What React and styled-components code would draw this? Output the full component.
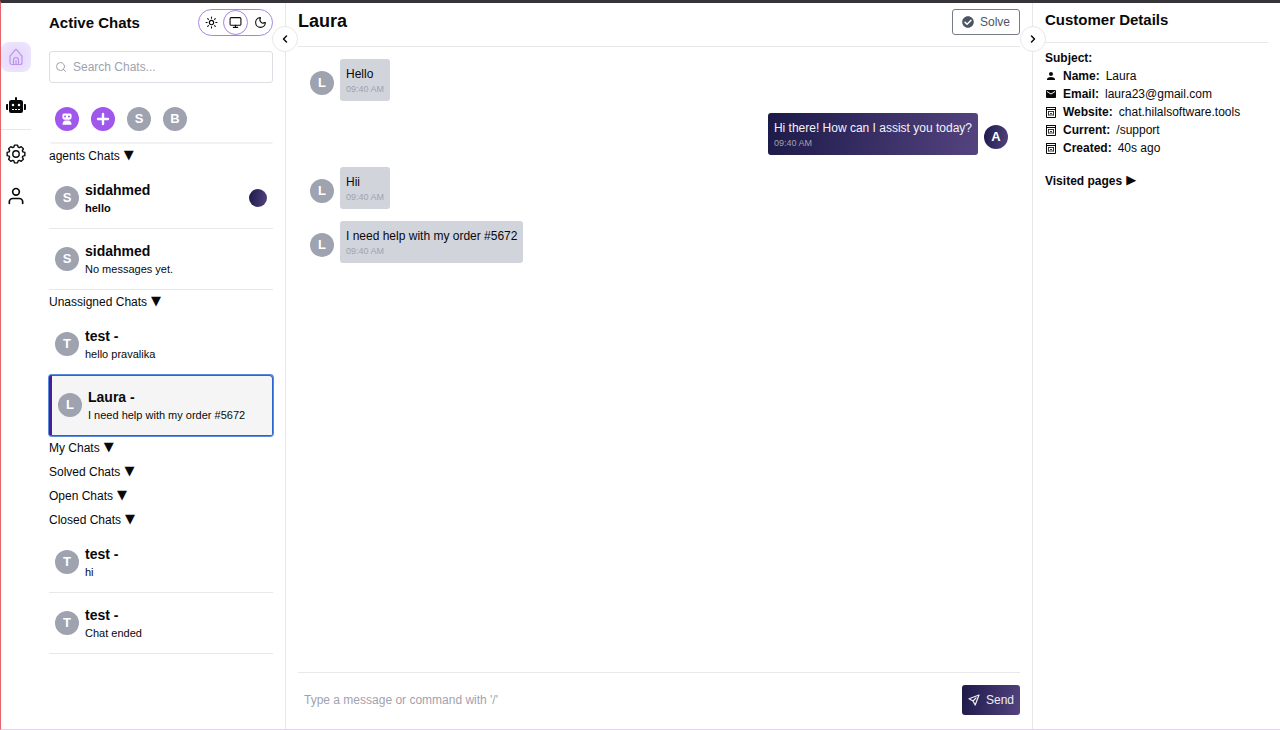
import React, { useState } from 'react';
import styled, { createGlobalStyle } from 'styled-components';
import { FaRobot, FaCheckCircle } from 'react-icons/fa';
import { FiSearch, FiUser, FiChevronLeft, FiChevronRight } from 'react-icons/fi';
import { MdEmail, MdPerson } from 'react-icons/md';
import { Sun, Monitor, Moon } from 'lucide-react';

const GRADIENT = 'linear-gradient(100deg, #1c1a49 0%, #54437f 100%)';
const LINE = '#e8e8eb';
const GREY = '#9fa2af';
const PURPLE = '#9f57ec';

const SECTIONS = [
  {
    title: 'agents Chats',
    chats: [
      { id: 1, initial: 'S', name: 'sidahmed', last: 'hello', unread: true },
      { id: 2, initial: 'S', name: 'sidahmed', last: 'No messages yet.' },
    ],
  },
  {
    title: 'Unassigned Chats',
    chats: [
      { id: 3, initial: 'T', name: 'test -', last: 'hello pravalika' },
      { id: 4, initial: 'L', name: 'Laura -', last: 'I need help with my order #5672' },
    ],
  },
  { title: 'My Chats', chats: [] },
  { title: 'Solved Chats', chats: [] },
  { title: 'Open Chats', chats: [] },
  {
    title: 'Closed Chats',
    chats: [
      { id: 5, initial: 'T', name: 'test -', last: 'hi' },
      { id: 6, initial: 'T', name: 'test -', last: 'Chat ended' },
    ],
  },
];

const MESSAGES = [
  { text: 'Hello', time: '09:40 AM' },
  { text: 'Hi there! How can I assist you today?', time: '09:40 AM', mine: true },
  { text: 'Hii', time: '09:40 AM' },
  { text: 'I need help with my order #5672', time: '09:40 AM' },
];

const DETAILS = [
  { icon: <MdPerson />, label: 'Name:', value: 'Laura' },
  { icon: <MdEmail />, label: 'Email:', value: 'laura23@gmail.com' },
  { icon: <PageIcon />, label: 'Website:', value: 'chat.hilalsoftware.tools' },
  { icon: <PageIcon />, label: 'Current:', value: '/support' },
  { icon: <PageIcon />, label: 'Created:', value: '40s ago' },
];

function PageIcon() {
  return (
    <svg viewBox="0 0 12 12" fill="none" stroke="currentColor">
      <path d="M1.5 1v10.500h9V1M1 1.500h10M1 3.500h10" />
      <path d="M3.500 5v4.500M8.500 5v4.500M3.500 9h5M3.500 5.500h5M5 7.500h2" strokeWidth="0.8" />
    </svg>
  );
}

function HomeIcon() {
  return (
    <svg viewBox="0 0 18 18" width="18" height="18" fill="none" stroke="currentColor" strokeWidth="1.2" strokeLinejoin="round" strokeLinecap="round">
      <path d="M3 8.2 8.300 1.800a1 1 0 0 1 1.400 0L15 8.200v6.300a2 2 0 0 1-2 2H5a2 2 0 0 1-2-2z" />
      <path d="M6.500 16.300v-4.300a2.500 2.500 0 0 1 5 0v4.300M9 12.600v3.600" />
    </svg>
  );
}

// outline of a gear with eight rounded teeth
const GEAR_POINTS = Array.from({ length: 8 }, (_, i) => (
  [[-10, 9], [10, 9], [17, 7.2], [28, 7.2]].map(([offset, radius]) => {
    const angle = ((i * 45 + offset) * Math.PI) / 180;
    return `${(10 + radius * Math.sin(angle)).toFixed(2)},${(10 - radius * Math.cos(angle)).toFixed(2)}`;
  }).join(' ')
)).join(' ');

function GearIcon() {
  return (
    <svg viewBox="0 0 20 20" width="20" height="20" fill="none" stroke="currentColor" strokeWidth="1.4" strokeLinejoin="round">
      <polygon points={GEAR_POINTS} />
      <circle cx="10" cy="10" r="3.2" />
    </svg>
  );
}

function AgentIcon() {
  return (
    <svg viewBox="0 0 12 14" width="12" height="14">
      <path
        fill="#fff"
        fillRule="evenodd"
        d="M3 1.5h6a1.6 1.6 0 0 1 1.6 1.6v2A2.6 2.6 0 0 1 8 7.700H4a2.600 2.600 0 0 1-2.600-2.600v-2A1.600 1.600 0 0 1 3 1.500zM4.100 3.400a1 1 0 1 0 0 2 1 1 0 0 0 0-2zm3.800 0a1 1 0 1 0 0 2 1 1 0 0 0 0-2z"
      />
      <path fill="#fff" d="M3.800 8.600h4.400c1.500.7 2.300 2 2.300 4.200h-9c0-2.200.8-3.500 2.300-4.200z" />
    </svg>
  );
}

export default function App() {
  const [selected, setSelected] = useState(4);

  return (
    <Page>
      <GlobalStyle />
      <Nav>
        <NavLink href="#home" aria-label="Home" $active><HomeIcon /></NavLink>
        <NavLink href="#bots" aria-label="Bots"><FaRobot size={20} /></NavLink>
        <NavLine />
        <NavLink href="#settings" aria-label="Settings"><GearIcon /></NavLink>
        <NavLink href="#profile" aria-label="Profile"><FiUser size={20} /></NavLink>
      </Nav>

      <ChatPanel>
        <Collapse aria-label="Collapse chats"><FiChevronLeft size={12} strokeWidth={3} /></Collapse>
        <PanelHead>
          <Heading>Active Chats</Heading>
          <ThemeSwitch>
            <ThemeButton aria-label="Light"><Sun size={13} /></ThemeButton>
            <ThemeButton aria-label="System" $active><Monitor size={13} /></ThemeButton>
            <ThemeButton aria-label="Dark"><Moon size={13} /></ThemeButton>
          </ThemeSwitch>
        </PanelHead>
        <SearchBox>
          <FiSearch size={12} />
          <SearchInput type="text" placeholder="Search Chats..." />
        </SearchBox>
        <Agents>
          <Bubble as="button" $color={PURPLE} aria-label="Bot"><AgentIcon /></Bubble>
          <Bubble as="button" $color={PURPLE} aria-label="Add agent">
            <svg width="14" height="14" viewBox="0 0 14 14" stroke="#fff" strokeWidth="2.4" strokeLinecap="round">
              <path d="M7 2v10M2 7h10" />
            </svg>
          </Bubble>
          <Bubble as="button">S</Bubble>
          <Bubble as="button">B</Bubble>
        </Agents>
        {SECTIONS.map(section => (
          <section key={section.title}>
            <SectionToggle>{section.title} <Arrow>▼</Arrow></SectionToggle>
            {section.chats.map(chat => (
              <ChatRow key={chat.id} $active={chat.id === selected} onClick={() => setSelected(chat.id)}>
                <Bubble>{chat.initial}</Bubble>
                <ChatText>
                  <ChatName>{chat.name}</ChatName>
                  <LastMessage $unread={chat.unread}>{chat.last}</LastMessage>
                </ChatText>
                {chat.unread && <UnreadDot />}
              </ChatRow>
            ))}
          </section>
        ))}
      </ChatPanel>

      <Conversation>
        <ConversationHead>
          <CustomerName>Laura</CustomerName>
          <SolveButton><FaCheckCircle size={12} /> Solve</SolveButton>
        </ConversationHead>
        <Messages>
          {MESSAGES.map((message, i) => (
            <MessageRow key={i} $mine={message.mine}>
              <Bubble $color={message.mine && GRADIENT}>{message.mine ? 'A' : 'L'}</Bubble>
              <MessageBox $mine={message.mine}>
                <div>{message.text}</div>
                <Time>{message.time}</Time>
              </MessageBox>
            </MessageRow>
          ))}
        </Messages>
        <Composer>
          <MessageInput type="text" aria-label="Message" placeholder="Type a message or command with '/'" />
          <SendButton>
            <svg width="12" height="12" viewBox="0 0 12 12" fill="none" stroke="currentColor" strokeWidth="1.2" strokeLinejoin="round" strokeLinecap="round">
              <path d="M11 1 1 4.800l4 2.200 2.200 4zM5 7l3-3" />
            </svg>
            Send
          </SendButton>
        </Composer>
      </Conversation>

      <Details>
        <Collapse aria-label="Collapse details" $left><FiChevronRight size={12} strokeWidth={3} /></Collapse>
        <DetailsHead><Heading>Customer Details</Heading></DetailsHead>
        <DetailRow><b>Subject:</b></DetailRow>
        {DETAILS.map(row => (
          <DetailRow key={row.label}>
            {row.icon}
            <b>{row.label}</b>
            <span>{row.value}</span>
          </DetailRow>
        ))}
        <VisitedToggle>Visited pages <Arrow>▶</Arrow></VisitedToggle>
      </Details>
    </Page>
  );
}

const GlobalStyle = createGlobalStyle`
  * {
    box-sizing: border-box;
  }
  body {
    margin: 0;
    color: #09090b;
    background: #fff;
    font: 12px/18px "Liberation Sans", Arial, sans-serif;
  }
  button, input {
    font: inherit;
    color: inherit;
    margin: 0;
    padding: 0;
    border: none;
    background: none;
  }
  button {
    cursor: pointer;
  }
`

const Page = styled.div`
  display: flex;
  min-height: 100vh;
  border-top: 3px solid #37353a;
  border-left: 1px solid #e5646a;
  border-bottom: 1px solid #e3d0ea;
`

const Nav = styled.nav`
  flex: none;
  width: 36px;
  padding-top: 39px;
  display: flex;
  flex-direction: column;
`

const NavLink = styled.a`
  width: 30px;
  height: 30px;
  margin-bottom: ${props => props.$active ? 18 : 12}px;
  display: flex;
  align-items: center;
  justify-content: center;
  border-radius: 8px;
  color: ${props => props.$active ? '#bd93ee' : '#09090b'};
  background: ${props => props.$active ? 'radial-gradient(#e3d5f9, #f0e8fe)' : 'none'};
`

const NavLine = styled.div`
  width: 30px;
  height: 1px;
  margin: -3px 0 9px;
  background: ${LINE};
`

const ChatPanel = styled.aside`
  position: relative;
  flex: none;
  width: 249px;
  padding: 6px 12px;
  border-right: 1px solid ${LINE};
`

const Collapse = styled.button`
  position: absolute;
  z-index: 1;
  top: 23px;
  ${props => props.$left ? 'left: -13px;' : 'right: -13px;'}
  width: 26px;
  height: 26px;
  display: flex;
  align-items: center;
  justify-content: center;
  border: 1px solid ${LINE};
  border-radius: 50%;
  background: #fff;
`

const PanelHead = styled.header`
  display: flex;
  align-items: center;
  justify-content: space-between;
`

const Heading = styled.h2`
  margin: 0;
  font-size: 15px;
  line-height: 21px;
`

const ThemeSwitch = styled.div`
  display: flex;
  border: 1px solid #a583ec;
  border-radius: 14px;
`

const ThemeButton = styled.button`
  width: ${props => props.$active ? 25 : 24}px;
  height: 25px;
  display: flex;
  align-items: center;
  justify-content: center;
  border-radius: 50%;
  border: 1px solid ${props => props.$active ? '#a583ec' : 'transparent'};
`

const SearchBox = styled.label`
  display: flex;
  align-items: center;
  gap: 6px;
  height: 32px;
  margin-top: 15px;
  padding: 0 5px;
  border: 1px solid #dddee3;
  border-radius: 3px;
  color: ${GREY};
`

const SearchInput = styled.input`
  flex: 1;
  min-width: 0;
  outline: none;
  &::placeholder {
    color: ${GREY};
  }
`

const Agents = styled.div`
  display: flex;
  gap: 12px;
  margin-top: 18px;
  padding: 6px 6px 11px;
  border-bottom: 2px solid #f2f2f4;
  border-radius: 3px;
`

const Bubble = styled.span`
  flex: none;
  width: 24px;
  height: 24px;
  display: flex;
  align-items: center;
  justify-content: center;
  border-radius: 50%;
  color: #fff;
  font-size: 13px;
  font-weight: bold;
  background: ${props => props.$color || GREY};
`

const SectionToggle = styled.button`
  display: flex;
  align-items: center;
  gap: 4px;
  height: 24px;
`

const Arrow = styled.span`
  padding-bottom: 2px;
  font-family: "DejaVu Sans", sans-serif;
  font-size: 13px;
  line-height: 16px;
  font-weight: normal;
`

const ChatRow = styled.button`
  width: 100%;
  height: 61px;
  padding: 0 6px;
  display: flex;
  align-items: center;
  gap: 6px;
  text-align: left;
  border-bottom: 1px solid ${LINE};
  ${props => props.$active && `
    border-left: 3px solid #4c1d95;
    border-bottom-color: #2b66cf;
    border-radius: 3px;
    background: #f5f5f6;
    box-shadow: inset -1px 1px #2b66cf, 0 0 0 1px #5b8bdc;
  `}
`

const ChatText = styled.div`
  flex: 1;
  min-width: 0;
`

const ChatName = styled.div`
  font-size: 14px;
  line-height: 21px;
  font-weight: bold;
`

const LastMessage = styled.div`
  font-size: 11px;
  line-height: 15px;
  font-weight: ${props => props.$unread ? 'bold' : 'normal'};
`

const UnreadDot = styled.span`
  width: 18px;
  height: 18px;
  border-radius: 50%;
  background: ${GRADIENT};
`

const Conversation = styled.main`
  flex: 1;
  min-width: 0;
  padding: 6px 12px 0;
  display: flex;
  flex-direction: column;
`

const ConversationHead = styled.header`
  display: flex;
  justify-content: space-between;
  align-items: flex-start;
  padding-bottom: 11px;
  border-bottom: 1px solid ${LINE};
`

const CustomerName = styled.h1`
  margin: 0;
  font-size: 18px;
  line-height: 24px;
`

const SolveButton = styled.button`
  display: flex;
  align-items: center;
  gap: 6px;
  height: 26px;
  padding: 0 9px;
  color: #4b5563;
  border: 1px solid #777c88;
  border-radius: 3px;
`

const Messages = styled.div`
  flex: 1;
  display: flex;
  flex-direction: column;
  gap: 12px;
  padding: 12px;
`

const MessageRow = styled.div`
  display: flex;
  flex-direction: ${props => props.$mine ? 'row-reverse' : 'row'};
  align-items: flex-end;
  gap: 6px;
  ${Bubble} {
    margin-bottom: 6px;
  }
`

const MessageBox = styled.div`
  padding: 6px;
  border-radius: 3px;
  color: ${props => props.$mine ? '#f4f3f8' : '#09090b'};
  background: ${props => props.$mine ? GRADIENT : '#d2d4dc'};
`

const Time = styled.div`
  font-size: 9px;
  line-height: 12px;
  color: ${GREY};
`

const Composer = styled.footer`
  display: flex;
  align-items: center;
  padding: 12px 0 14px;
  border-top: 1px solid ${LINE};
`

const MessageInput = styled.input`
  flex: 1;
  min-width: 0;
  height: 30px;
  padding: 0 6px;
  outline: none;
  &::placeholder {
    color: ${GREY};
  }
`

const SendButton = styled.button`
  display: flex;
  align-items: center;
  gap: 6px;
  height: 30px;
  padding: 0 6px;
  border-radius: 3px;
  color: #eeedf4;
  background: ${GRADIENT};
`

const Details = styled.aside`
  position: relative;
  flex: none;
  width: 248px;
  padding: 6px 12px;
  border-left: 1px solid ${LINE};
`

const DetailsHead = styled.header`
  padding-bottom: 12px;
  margin-bottom: 6px;
  border-bottom: 1px solid ${LINE};
`

const DetailRow = styled.div`
  display: flex;
  align-items: center;
  gap: 6px;
  line-height: 18px;
  svg {
    flex: none;
    width: 12px;
    height: 12px;
  }
`

const VisitedToggle = styled.button`
  display: flex;
  align-items: center;
  gap: 4px;
  margin-top: 15px;
  font-weight: bold;
`
